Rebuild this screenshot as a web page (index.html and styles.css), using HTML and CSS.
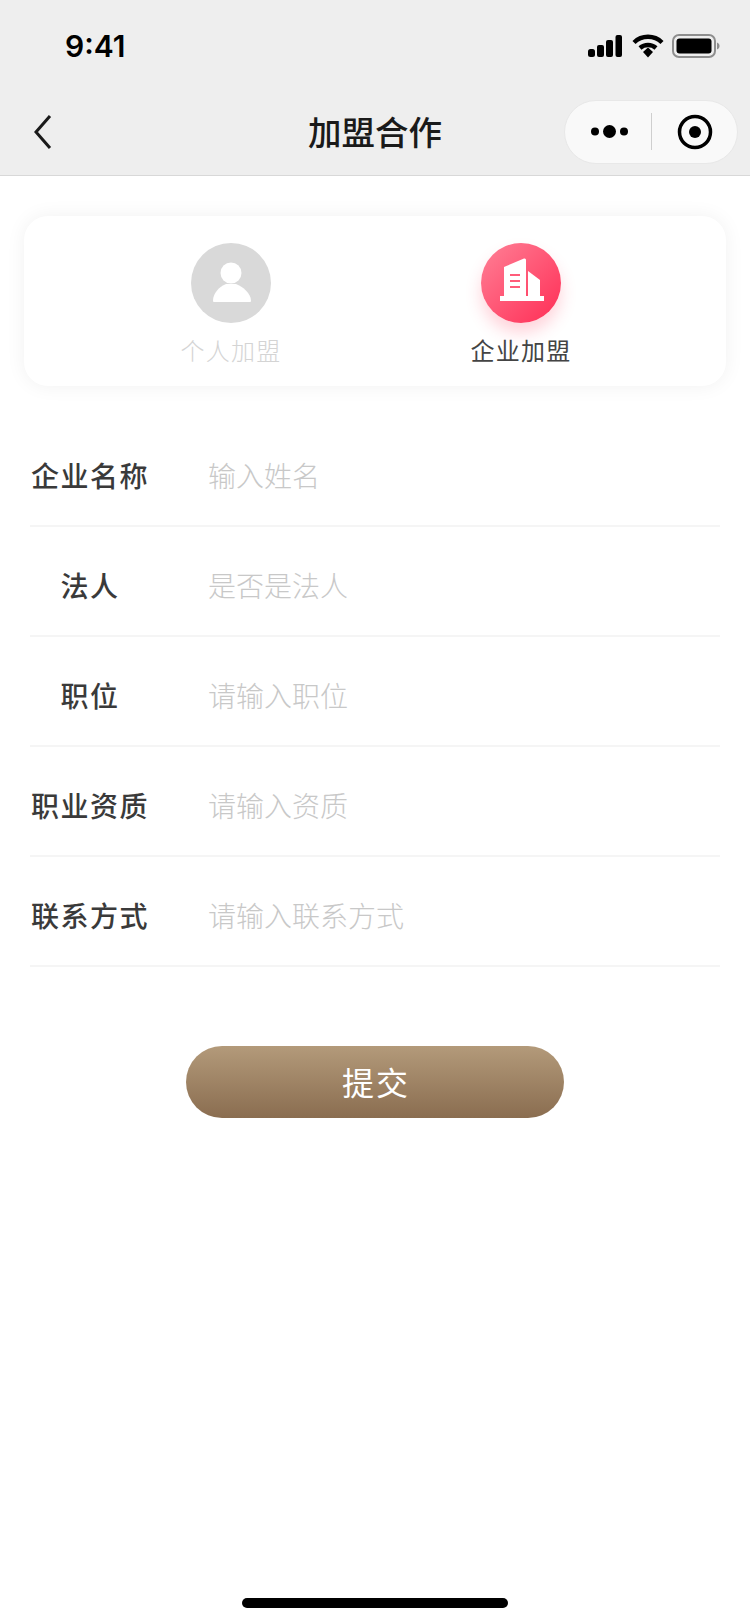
FILE: index.html
```html
<!DOCTYPE html>
<html lang="zh-CN">
  <head>
    <meta charset="UTF-8" />
    <meta name="viewport" content="width=device-width, initial-scale=1.0" />
    <title>加盟合作</title>
    <link rel="stylesheet" href="styles.css">
  </head>
  <body>
    <div class="phone">
      <div class="header">
        <div class="status-bar">
          <span class="time">9:41</span>
          <div class="status-icons">
            <svg class="signal" width="34" height="22" viewBox="0 0 34 22">
              <rect x="0" y="14" width="7" height="8" rx="2.500" />
              <rect x="9" y="10" width="7" height="12" rx="2" />
              <rect x="18" y="5" width="7" height="17" rx="2" />
              <rect x="27.500" y="0" width="6.500" height="22" rx="2" />
            </svg>
            <svg class="wifi" width="32" height="24" viewBox="0 0 32 24">
              <path d="M2 8.500 A20 20 0 0 1 30 8.500" fill="none" stroke="#000" stroke-width="4.400" />
              <path d="M8 14 A12 12 0 0 1 24 14" fill="none" stroke="#000" stroke-width="4.400" />
              <path d="M11 18 L16 13.500 L21 18 L16 23.500 Z" />
            </svg>
            <svg class="battery" width="48" height="24" viewBox="0 0 48 24">
              <rect x="1" y="1" width="42" height="22" rx="6" fill="none" stroke="#8e8e8e" stroke-width="2" />
              <rect x="4.500" y="4.500" width="35" height="15" rx="3" />
              <path d="M45 8.500 C47 9.500 47.500 10.500 47.500 12 C47.500 13.500 47 14.500 45 15.500 Z" fill="#8e8e8e" />
            </svg>
          </div>
        </div>
        <div class="nav-bar">
          <svg class="back" width="20" height="36" viewBox="0 0 20 36">
            <path d="M17 2 L3 18 L17 34" fill="none" stroke="#1a1a1a" stroke-width="3" />
          </svg>
          <h1 class="nav-title">加盟合作</h1>
          <div class="capsule">
            <svg class="more" width="37" height="13" viewBox="0 0 37 13">
              <circle cx="4" cy="6.500" r="4" />
              <circle cx="18.500" cy="6.500" r="6.500" />
              <circle cx="33" cy="6.500" r="4" />
            </svg>
            <span class="capsule-line"></span>
            <svg class="target" width="36" height="36" viewBox="0 0 36 36">
              <circle cx="18" cy="18" r="15.500" fill="none" stroke="#000" stroke-width="3.500" />
              <circle cx="18" cy="18" r="6" />
            </svg>
          </div>
        </div>
      </div>

      <div class="type-card">
        <div class="type-item">
          <div class="type-icon grey">
            <svg width="80" height="80" viewBox="0 0 80 80">
              <circle cx="40" cy="30" r="10.500" fill="#fff" />
              <path d="M22 58 C22 50 28 44 35 41 L45 41 C52 44 60 50 60 58 Q60 59 59 59 L23 59 Q22 59 22 58 Z" fill="#fff" />
            </svg>
          </div>
          <span class="type-name off">个人加盟</span>
        </div>
        <div class="type-item">
          <div class="type-icon red">
            <svg width="80" height="80" viewBox="0 0 80 80">
              <path d="M23 24 L43 15.500 Q45 15 45 17 L45 53 L23 53 Z" fill="#fff" />
              <path d="M47 28 L59 37 L59 53 L47 53 Z" fill="#fff" />
              <rect x="19" y="53" width="44" height="5" fill="#fff" />
              <rect x="29" y="31" width="10" height="2" fill="#ff5c7a" />
              <rect x="29" y="37" width="10" height="2" fill="#ff5c7a" />
              <rect x="29" y="43" width="10" height="2" fill="#ff5c7a" />
            </svg>
          </div>
          <span class="type-name">企业加盟</span>
        </div>
      </div>

      <form class="form">
        <div class="form-row">
          <label class="form-label">企业名称</label>
          <span class="form-hint">输入姓名</span>
        </div>
        <div class="form-row">
          <label class="form-label">法人</label>
          <span class="form-hint">是否是法人</span>
        </div>
        <div class="form-row">
          <label class="form-label">职位</label>
          <span class="form-hint">请输入职位</span>
        </div>
        <div class="form-row">
          <label class="form-label">职业资质</label>
          <span class="form-hint">请输入资质</span>
        </div>
        <div class="form-row">
          <label class="form-label">联系方式</label>
          <span class="form-hint">请输入联系方式</span>
        </div>
      </form>

      <button class="submit" type="button">提交</button>

      <div class="home-bar"></div>
    </div>
  </body>
</html>
```

FILE: styles.css
```css
* {
  box-sizing: border-box;
}
body {
  margin: 0;
  background-color: white;
  font-family: "Noto Sans CJK SC", "Noto Sans", sans-serif;
}
.phone {
  width: 750px;
  height: 1624px;
  display: flex;
  flex-direction: column;
  overflow: hidden;
}
.header {
  height: 176px;
  background-color: #eeeeee;
  border-bottom: 1px solid #d8d8d8;
}
.status-bar {
  height: 88px;
  padding: 4px 30px 0 65px;
  display: flex;
  justify-content: space-between;
  align-items: center;
}
.time {
  font-family: Inter, "Liberation Sans", sans-serif;
  font-size: 30px;
  font-weight: 600;
  color: #000;
}
.status-icons {
  display: flex;
  align-items: center;
  gap: 10px;
}
.wifi {
  margin-right: -2px;
}
.nav-bar {
  height: 87px;
  padding: 0 12px 0 33px;
  display: flex;
  align-items: center;
  justify-content: space-between;
  position: relative;
}
.nav-title {
  position: absolute;
  left: 0;
  right: 0;
  top: 19px;
  margin: 0;
  text-align: center;
  font-size: 33.5px;
  line-height: 48px;
  font-weight: 500;
  color: #1a1a1a;
}
.capsule {
  width: 174px;
  height: 64px;
  border-radius: 32px;
  background-color: #f9f9f9;
  border: 1px solid #e8e8e8;
  display: flex;
  align-items: center;
  padding-left: 26px;
}
.capsule-line {
  width: 1px;
  height: 37px;
  background-color: #cfcfcf;
  margin: 0 25px 0 23px;
}
.type-card {
  margin: 40px 24px 0;
  height: 170px;
  border-radius: 24px;
  background-color: white;
  box-shadow: 0 0 20px rgba(0, 0, 0, 0.06);
  display: grid;
  grid-template-columns: 290px 290px;
  justify-content: center;
  padding: 27px 0 0 2px;
}
.type-item {
  display: flex;
  flex-direction: column;
  align-items: center;
  gap: 10px;
}
.type-icon {
  width: 80px;
  height: 80px;
  border-radius: 50%;
}
.type-icon svg {
  display: block;
}
.type-icon.grey {
  background-color: #d9d9d9;
}
.type-icon.red {
  background: linear-gradient(135deg, #ff8096, #ff2d55);
  box-shadow: 0 10px 16px rgba(255, 60, 90, 0.22);
}
.type-name {
  font-size: 24px;
  line-height: 34px;
  letter-spacing: 1.2px;
  font-weight: 400;
  color: #444;
}
.type-name.off {
  font-weight: 300;
  color: #d4d4d4;
}
.form {
  margin: 31px 30px 0;
}
.form-row {
  height: 110px;
  padding-top: 8px;
  border-bottom: 2px solid #f5f5f5;
  display: flex;
  align-items: center;
}
.form-label {
  width: 120px;
  margin-right: 58px;
  text-align: center;
  white-space: nowrap;
  font-size: 28px;
  letter-spacing: 1.5px;
  font-weight: 500;
  color: #3a3a3a;
}
.form-hint {
  font-size: 28px;
  font-weight: 300;
  color: #c8c8c8;
}
.submit {
  width: 378px;
  height: 72px;
  margin: 79px auto 0;
  padding: 0 0 3px 2px;
  border: none;
  border-radius: 36px;
  background: linear-gradient(180deg, #b39a7a, #8a6d50);
  color: white;
  font-family: inherit;
  font-size: 32px;
  font-weight: 400;
  letter-spacing: 2px;
}
.home-bar {
  width: 266px;
  height: 10px;
  border-radius: 5px;
  background-color: #000;
  margin: auto auto 16px;
}
```
